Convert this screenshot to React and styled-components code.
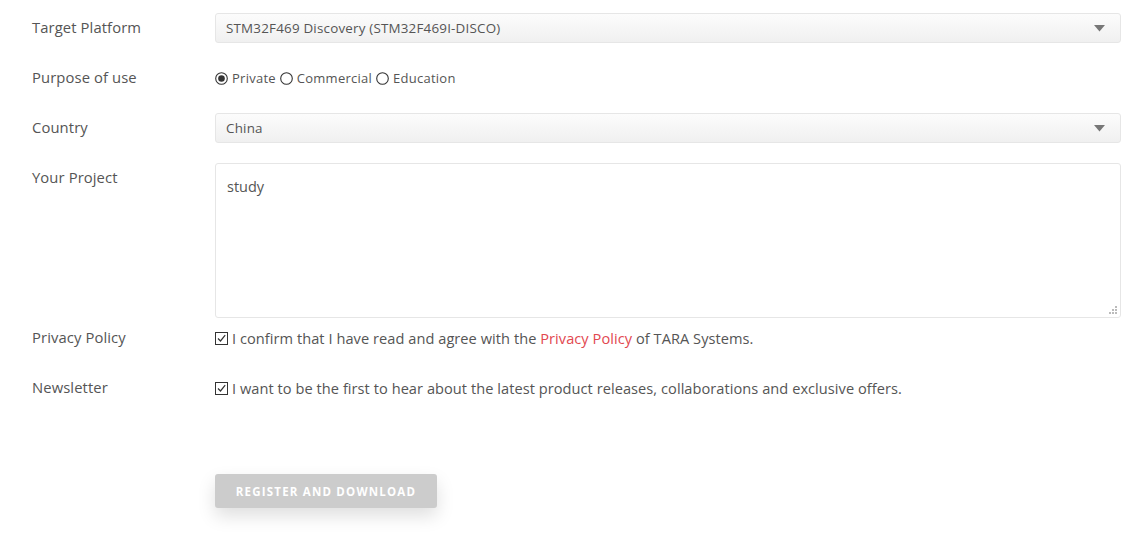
import React from "react";
import styled, { createGlobalStyle } from "styled-components";

const Global = createGlobalStyle`
  html, body { margin: 0; padding: 0; background: #fff; }
  body { font-family: "Open Sans", "Noto Sans", sans-serif; color: #555; }
`;

const Form = styled.form`
  display: flex;
  flex-direction: column;
  padding: 13px 18px 30px 32px;
`;

const Row = styled.div`
  display: grid;
  grid-template-columns: 183px 1fr;
  align-items: start;
  margin-bottom: ${(p) => p.$gap ?? 20}px;
`;

const Label = styled.div`
  font-size: 14.8px;
  letter-spacing: 0.1px;
  line-height: 28px;
  color: #555;
`;

const Select = styled.div`
  position: relative;
  height: 30px;
  box-sizing: border-box;
  border: 1px solid #e6e6e6;
  border-radius: 3px;
  background: linear-gradient(#fcfcfc, #f0f0f0);
  display: flex;
  align-items: center;
  padding: 0 10px;
  font-size: 13.4px;
  letter-spacing: 0.2px;
  color: #555;
  justify-content: space-between;
`;

const Arrow = styled.svg`
  width: 11px;
  height: 7px;
  margin-right: 5px;
`;

const Options = styled.div`
  display: flex;
  align-items: center;
  height: 30px;
  font-size: 13px;
  letter-spacing: 0.25px;
  color: #555;
  gap: 4px;
`;

const Option = styled.label`
  display: flex;
  align-items: center;
  gap: 4px;
`;

const TextBox = styled.div`
  position: relative;
  height: 155px;
  box-sizing: border-box;
  border: 1px solid #e6e6e6;
  border-radius: 3px;
  background: #fff;
`;

const Area = styled.textarea`
  width: 100%;
  height: 100%;
  box-sizing: border-box;
  border: none;
  outline: none;
  resize: none;
  background: transparent;
  font-family: inherit;
  font-size: 14.5px;
  color: #555;
  padding: 13px 11px;
`;

const Grip = styled.svg`
  position: absolute;
  right: 3px;
  bottom: 3px;
  width: 8px;
  height: 8px;
`;

const Check = styled.div`
  display: flex;
  align-items: center;
  height: 30px;
  font-size: 14.6px;
  letter-spacing: 0.05px;
  color: #555;
  gap: 4px;
  white-space: nowrap;
`;

const Link = styled.a`
  color: #e2474f;
  text-decoration: none;
`;

const ButtonRow = styled.div`
  padding: 51px 0 0 183px;
`;

const Button = styled.button`
  width: 222px;
  height: 34px;
  border: none;
  border-radius: 3px;
  background: #cccccc;
  color: #fff;
  font-family: inherit;
  font-size: 11.5px;
  font-weight: 700;
  letter-spacing: 1.2px;
  text-transform: uppercase;
  box-shadow: 0 8px 18px rgba(0, 0, 0, 0.13);
`;

const Radio = ({ checked }) => (
  <svg width="13" height="13" viewBox="0 0 13 13">
    <circle cx="6.5" cy="6.5" r="5.8" fill="#fff" stroke="#333" strokeWidth="1.1" />
    {checked && <circle cx="6.5" cy="6.5" r="3.3" fill="#333" />}
  </svg>
);

const Box = () => (
  <svg width="13" height="13" viewBox="0 0 13 13">
    <rect x="0.5" y="0.5" width="12" height="12" fill="#fff" stroke="#333" strokeWidth="1" />
    <path d="M3 6.5 L5.5 9 L10.2 3.2" fill="none" stroke="#333" strokeWidth="1.2" />
  </svg>
);

const SelectBox = ({ value }) => (
  <Select>
    <span>{value}</span>
    <Arrow viewBox="0 0 11 7">
      <path d="M0 0 H11 L5.5 6.5 Z" fill="#777" />
    </Arrow>
  </Select>
);

export default function App() {
  return (
    <>
      <Global />
      <Form>
        <Row>
          <Label>Target Platform</Label>
          <SelectBox value="STM32F469 Discovery (STM32F469I-DISCO)" />
        </Row>
        <Row>
          <Label>Purpose of use</Label>
          <Options>
            <Option><Radio checked />Private</Option>
            <Option><Radio />Commercial</Option>
            <Option><Radio />Education</Option>
          </Options>
        </Row>
        <Row>
          <Label>Country</Label>
          <SelectBox value="China" />
        </Row>
        <Row $gap={5}>
          <Label>Your Project</Label>
          <TextBox>
            <Area defaultValue="study" />
            <Grip viewBox="0 0 8 8">
              <rect x="6" y="0" width="2" height="2" fill="#bbb" />
              <rect x="3" y="3" width="2" height="2" fill="#bbb" />
              <rect x="6" y="3" width="2" height="2" fill="#bbb" />
              <rect x="0" y="6" width="2" height="2" fill="#bbb" />
              <rect x="3" y="6" width="2" height="2" fill="#bbb" />
              <rect x="6" y="6" width="2" height="2" fill="#bbb" />
            </Grip>
          </TextBox>
        </Row>
        <Row>
          <Label>Privacy Policy</Label>
          <Check>
            <Box />
            <span>
              I confirm that I have read and agree with the <Link href="#">Privacy Policy</Link> of TARA Systems.
            </span>
          </Check>
        </Row>
        <Row>
          <Label>Newsletter</Label>
          <Check>
            <Box />
            <span>I want to be the first to hear about the latest product releases, collaborations and exclusive offers.</span>
          </Check>
        </Row>
        <ButtonRow>
          <Button type="button">Register and Download</Button>
        </ButtonRow>
      </Form>
    </>
  );
}
